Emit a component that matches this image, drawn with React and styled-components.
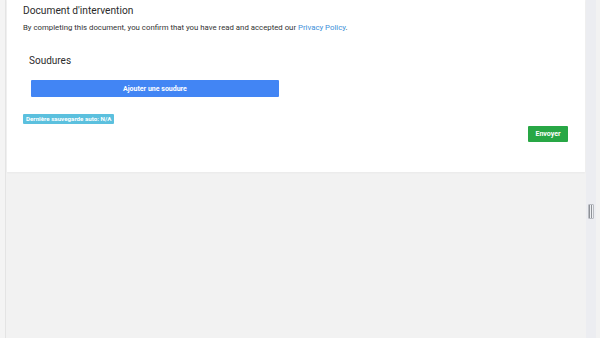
import React from 'react';
import styled, { createGlobalStyle } from 'styled-components';

const GlobalStyle = createGlobalStyle`
  html, body {
    margin: 0;
    padding: 0;
    background: #f2f2f2;
    font-family: Roboto, "Liberation Sans", sans-serif;
    overflow: hidden;
  }
`;

const Page = styled.div`
  display: flex;
  flex-direction: row;
  width: 600px;
  height: 338px;
  background: #f2f2f2;
`;

const LeftRail = styled.div`
  width: 5px;
  background: #f4f4f4;
  border-right: 1px solid #e4e4e4;
`;

const Main = styled.div`
  flex: 1;
  display: flex;
  flex-direction: column;
  padding-left: 1px;
`;

const Card = styled.div`
  width: 578px;
  height: 172px;
  background: #ffffff;
  box-sizing: border-box;
  padding: 4px 17px 0 16px;
  display: flex;
  flex-direction: column;
  box-shadow: 0 1px 2px rgba(0, 0, 0, 0.04);
`;

const Title = styled.h1`
  margin: 0;
  font-size: 10.2px;
  font-weight: 400;
  color: #2b2b2b;
  line-height: 14px;
`;

const Notice = styled.p`
  margin: 5px 0 0 0;
  font-size: 7.8px;
  color: #333;
  line-height: 10px;
`;

const Link = styled.a`
  color: #3b8fd9;
  text-decoration: none;
`;

const Section = styled.div`
  display: flex;
  flex-direction: column;
  padding-left: 6px;
  margin-top: 22px;
`;

const SectionTitle = styled.h2`
  margin: 0;
  font-size: 10px;
  font-weight: 400;
  color: #2b2b2b;
  line-height: 12px;
`;

const WideButton = styled.button`
  margin: 13px 0 0 2px;
  width: 248px;
  height: 17px;
  border: none;
  border-radius: 1px;
  background: #4285f4;
  color: #fff;
  font-family: inherit;
  font-size: 7px;
  font-weight: 700;
  padding: 0;
`;

const Badge = styled.span`
  align-self: flex-start;
  margin-top: 17px;
  background: #5bc0de;
  color: #fff;
  font-size: 6.2px;
  font-weight: 700;
  line-height: 10px;
  padding: 0 3px;
  border-radius: 1px;
`;

const Footer = styled.div`
  display: flex;
  justify-content: flex-end;
  margin-top: 2px;
`;

const SubmitButton = styled.button`
  width: 40px;
  height: 16px;
  border: none;
  border-radius: 1px;
  background: #28a745;
  color: #fff;
  font-family: inherit;
  font-size: 7px;
  font-weight: 700;
  padding: 0;
`;

const RightRail = styled.div`
  width: 10px;
  margin-left: 1px;
  margin-right: 4px;
  background: #ecedf1;
  display: flex;
  flex-direction: column;
  align-items: center;
  padding-top: 204px;
`;

const Grip = styled.div`
  width: 4px;
  height: 13px;
  border: 1px solid #b9bcc2;
  border-radius: 1px;
  background: repeating-linear-gradient(
    to right,
    #8e9197 0,
    #8e9197 1px,
    #eef0f3 1px,
    #eef0f3 2px
  );
`;

export default function App() {
  return (
    <Page>
      <GlobalStyle />
      <LeftRail />
      <Main>
        <Card>
          <Title>Document d'intervention</Title>
          <Notice>
            By completing this document, you confirm that you have read and accepted our{' '}
            <Link href="#">Privacy Policy</Link>.
          </Notice>
          <Section>
            <SectionTitle>Soudures</SectionTitle>
            <WideButton>Ajouter une soudure</WideButton>
          </Section>
          <Badge>Dernière sauvegarde auto: N/A</Badge>
          <Footer>
            <SubmitButton>Envoyer</SubmitButton>
          </Footer>
        </Card>
      </Main>
      <RightRail>
        <Grip />
      </RightRail>
    </Page>
  );
}
